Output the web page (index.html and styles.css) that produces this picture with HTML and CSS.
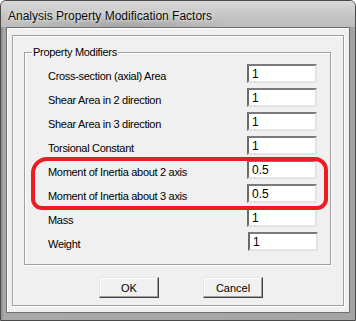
FILE: index.html
```html
<!DOCTYPE html>
<html lang="en">
<head>
  <meta charset="UTF-8" />
  <meta name="viewport" content="width=device-width, initial-scale=1.0"/>
  <title>Analysis Property Modification Factors</title>
  <link rel="stylesheet" href="styles.css">
</head>
<body>
  <div class="window">
    <div class="titlebar">
      <span class="title">Analysis Property Modification Factors</span>
    </div>
    <div class="client">
      <div class="panel">
        <fieldset class="group">
          <legend>Property Modifiers</legend>
          <div class="row"><label>Cross-section (axial) Area</label><input type="text" value="1" /></div>
          <div class="row"><label>Shear Area in 2 direction</label><input type="text" value="1" /></div>
          <div class="row"><label>Shear Area in 3 direction</label><input type="text" value="1" /></div>
          <div class="row"><label>Torsional Constant</label><input type="text" value="1" /></div>
          <div class="row"><label>Moment of Inertia about 2 axis</label><input type="text" value="0.5" /></div>
          <div class="row"><label>Moment of Inertia about 3 axis</label><input type="text" value="0.5" /></div>
          <div class="row"><label>Mass</label><input type="text" value="1" /></div>
          <div class="row nudge"><label>Weight</label><input type="text" value="1" /></div>
        </fieldset>
        <div class="buttons">
          <button>OK</button>
          <button>Cancel</button>
        </div>
      </div>
    </div>
    <!-- red marker drawn over the two inertia rows -->
    <div class="highlight"></div>
  </div>
</body>
</html>
```

FILE: styles.css
```css
body {
  margin: 0;
  background: #ffffff;
  font-family: "Liberation Sans", Arial, sans-serif;
}

.window {
  position: relative;
  box-sizing: border-box;
  width: 356px;
  height: 321px;
  border: 1px solid #4a4a4a;
  border-radius: 6px 6px 0 0;
  background: linear-gradient(to right, #8e8e8e 0, #a9a9a9 3px, #a4a4a4 100%);
  display: flex;
  flex-direction: column;
}

.titlebar {
  height: 26px;
  flex: none;
  border-radius: 5px 5px 0 0;
  background:
    radial-gradient(ellipse 110px 14px at 120px 24px, rgba(150, 150, 150, 0.6), rgba(150, 150, 150, 0)),
    linear-gradient(to bottom, #d9d9d9, #c3c3c3 60%, #bdbdbd);
  display: flex;
  align-items: center;
  padding-left: 7px;
}

.title {
  font-family: "Liberation Sans", Arial, sans-serif;
  font-size: 12px;
  color: #0a0a0a;
  text-shadow: 0 0 6px #ececec, 0 0 3px #ececec;
  margin-top: 3px;
}

.client {
  flex: none;
  margin: 0 5px 0 5px;
  height: 286px;
  box-sizing: border-box;
  border: 1px solid #6e6e6e;
  background: #f0f0f0;
  box-shadow: inset 1px 1px 0 #ffffff;
  padding: 7px 4px 0 5px;
}

.panel {
  box-sizing: border-box;
  width: 332px;
  height: 271px;
  border: 1px solid #a0a0a0;
  box-shadow: inset 1px 1px 0 #ffffff, 1px 1px 0 #ffffff;
}

.group {
  box-sizing: border-box;
  width: 307px;
  height: 219px;
  margin: 10px 0 0 11px;
  padding: 5px 13px 0 0;
  border: 1px solid #a0a0a0;
  box-shadow: inset 1px 1px 0 #ffffff, 1px 1px 0 #ffffff;
  font-size: 11px;
  letter-spacing: -0.3px;
  color: #000000;
}

.group legend {
  margin-left: 7px;
  padding: 0 1px 0 1px;
  font-size: 11px;
  line-height: 13px;
}

.row {
  display: flex;
  align-items: flex-start;
  height: 24px;
  padding-left: 23px;
}

.row label {
  flex: 1;
  padding-top: 6px;
  line-height: 13px;
}

.row input {
  box-sizing: border-box;
  width: 70px;
  height: 19px;
  margin: 0;
  padding: 1px 0 0 3px;
  border: 2px solid;
  border-color: #7a7a7a #e3e3e3 #e3e3e3 #6a6a6a;
  background: #ffffff;
  font-family: "Liberation Sans", Arial, sans-serif;
  font-size: 12px;
  color: #000000;
  outline: none;
}

.row.nudge input {
  margin-right: -1px;
}

.buttons {
  display: flex;
  gap: 44px;
  padding: 12px 0 0 86px;
}

.buttons button {
  box-sizing: border-box;
  width: 60px;
  height: 21px;
  padding: 0;
  border: 1px solid;
  border-color: #e3e3e3 #404040 #404040 #e3e3e3;
  box-shadow: inset -1px -1px 0 #a0a0a0, inset 1px 1px 0 #ffffff;
  background: #f0f0f0;
  font-family: "Liberation Sans", Arial, sans-serif;
  font-size: 11px;
  color: #000000;
}

.highlight {
  position: absolute;
  left: 30px;
  top: 156px;
  width: 297px;
  height: 53px;
  box-sizing: border-box;
  border: 4px solid #ed1c24;
  border-radius: 16px 13px 11px 11px;
}
```
